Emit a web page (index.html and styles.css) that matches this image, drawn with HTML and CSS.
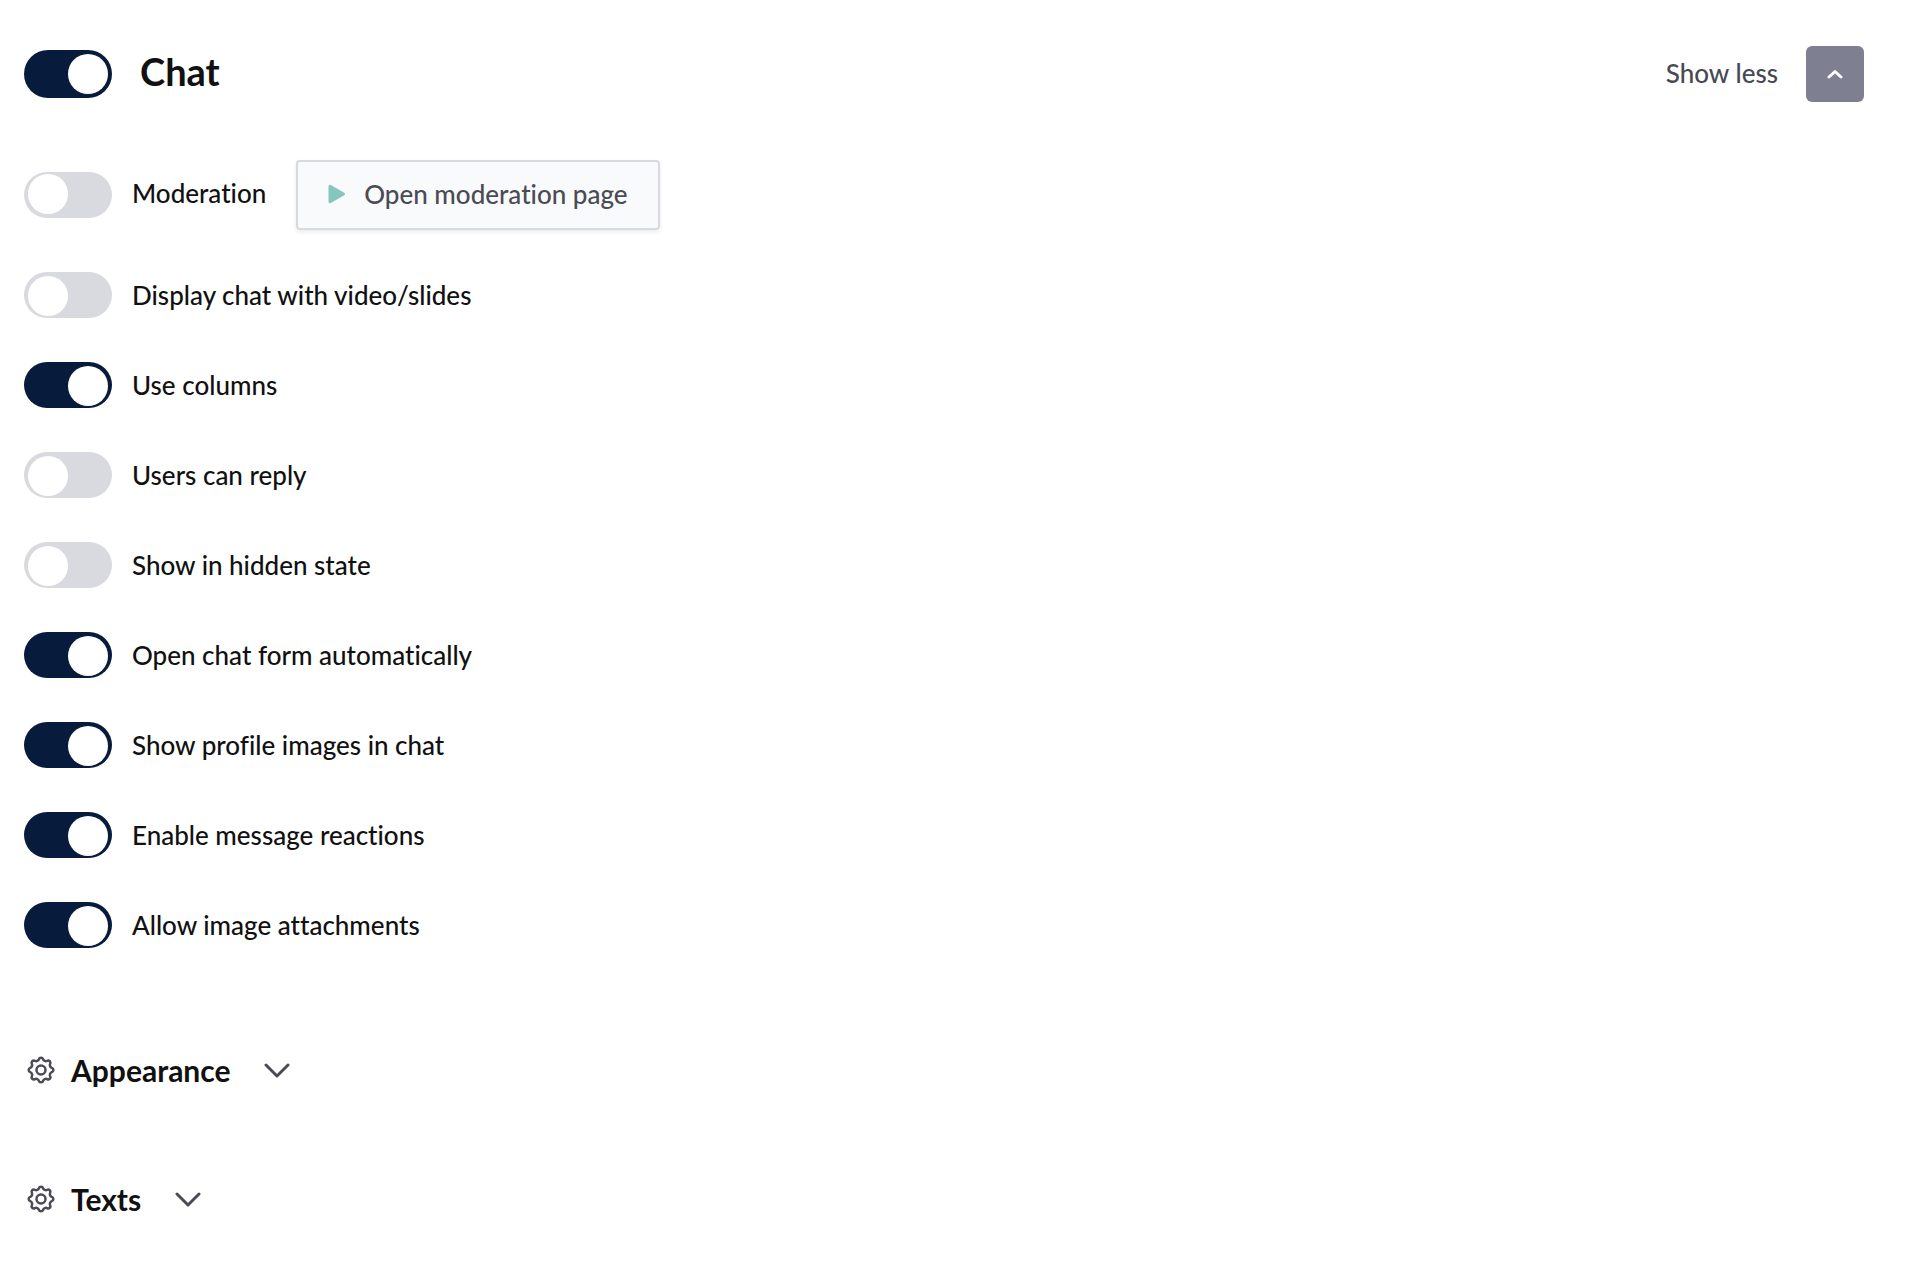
FILE: index.html
```html
<!DOCTYPE html>
<html lang="en">
<head>
    <meta charset="UTF-8">
    <meta name="viewport" content="width=device-width, initial-scale=1.0">
    <title>Chat settings</title>
    <link rel="stylesheet" href="styles.css">
</head>
<body>

<header class="panel-header">
    <input class="toggle toggle-large" type="checkbox" id="chat" checked>
    <h1><label for="chat">Chat</label></h1>
    <label class="show-less" for="collapse">Show less</label>
    <button class="collapse" id="collapse" type="button" aria-label="Show less">
        <svg width="16" height="10" viewBox="0 0 16 10"><path d="M2 8 L8 2.500 L14 8"/></svg>
    </button>
</header>

<main>
    <div class="options">
        <div class="option option-moderation">
            <input class="toggle" type="checkbox" id="moderation">
            <label for="moderation">Moderation</label>
            <button class="open-page" type="button">
                <svg width="18" height="20" viewBox="0 0 18 20"><path d="M2 2.200 L15.500 10 L2 17.800 Z"/></svg>
                Open moderation page
            </button>
        </div>
        <div class="option">
            <input class="toggle" type="checkbox" id="withVideo">
            <label for="withVideo">Display chat with video/slides</label>
        </div>
        <div class="option">
            <input class="toggle" type="checkbox" id="columns" checked>
            <label for="columns">Use columns</label>
        </div>
        <div class="option">
            <input class="toggle" type="checkbox" id="reply">
            <label for="reply">Users can reply</label>
        </div>
        <div class="option">
            <input class="toggle" type="checkbox" id="hiddenState">
            <label for="hiddenState">Show in hidden state</label>
        </div>
        <div class="option">
            <input class="toggle" type="checkbox" id="openForm" checked>
            <label for="openForm">Open chat form automatically</label>
        </div>
        <div class="option">
            <input class="toggle" type="checkbox" id="profileImages" checked>
            <label for="profileImages">Show profile images in chat</label>
        </div>
        <div class="option">
            <input class="toggle" type="checkbox" id="reactions" checked>
            <label for="reactions">Enable message reactions</label>
        </div>
        <div class="option">
            <input class="toggle" type="checkbox" id="attachments" checked>
            <label for="attachments">Allow image attachments</label>
        </div>
    </div>

    <!-- Collapsed sections -->
    <div class="sections">
        <h2>
            <button class="section" type="button" aria-expanded="false">
                <svg class="gear" width="28" height="28" viewBox="-14 -14 28 28">
                    <path d="M10.800 -2.100 A2.200 2.200 0 0 1 10.800 2.100 A3 3 0 0 0 9.100 6.100 A2.200 2.200 0 0 1 6.100 9.100 A3 3 0 0 0 2.100 10.800 A2.200 2.200 0 0 1 -2.100 10.800 A3 3 0 0 0 -6.100 9.100 A2.200 2.200 0 0 1 -9.100 6.100 A3 3 0 0 0 -10.800 2.100 A2.200 2.200 0 0 1 -10.800 -2.100 A3 3 0 0 0 -9.100 -6.100 A2.200 2.200 0 0 1 -6.100 -9.100 A3 3 0 0 0 -2.100 -10.800 A2.200 2.200 0 0 1 2.100 -10.800 A3 3 0 0 0 6.100 -9.100 A2.200 2.200 0 0 1 9.100 -6.100 A3 3 0 0 0 10.800 -2.100 Z"/>
                    <circle r="4.500"/>
                </svg>
                <span>Appearance</span>
                <svg class="chevron" width="26" height="16" viewBox="0 0 26 16"><path d="M2 3 L13 14 L24 3"/></svg>
            </button>
        </h2>
        <h2>
            <button class="section" type="button" aria-expanded="false">
                <svg class="gear" width="28" height="28" viewBox="-14 -14 28 28">
                    <path d="M10.800 -2.100 A2.200 2.200 0 0 1 10.800 2.100 A3 3 0 0 0 9.100 6.100 A2.200 2.200 0 0 1 6.100 9.100 A3 3 0 0 0 2.100 10.800 A2.200 2.200 0 0 1 -2.100 10.800 A3 3 0 0 0 -6.100 9.100 A2.200 2.200 0 0 1 -9.100 6.100 A3 3 0 0 0 -10.800 2.100 A2.200 2.200 0 0 1 -10.800 -2.100 A3 3 0 0 0 -9.100 -6.100 A2.200 2.200 0 0 1 -6.100 -9.100 A3 3 0 0 0 -2.100 -10.800 A2.200 2.200 0 0 1 2.100 -10.800 A3 3 0 0 0 6.100 -9.100 A2.200 2.200 0 0 1 9.100 -6.100 A3 3 0 0 0 10.800 -2.100 Z"/>
                    <circle r="4.500"/>
                </svg>
                <span>Texts</span>
                <svg class="chevron" width="26" height="16" viewBox="0 0 26 16"><path d="M2 3 L13 14 L24 3"/></svg>
            </button>
        </h2>
    </div>
</main>

</body>
</html>
```
FILE: styles.css
```css
* {
    box-sizing: border-box;
}

body {
    font-family: Lato, "Liberation Sans", sans-serif;
    font-size: 26px;
    font-weight: 500;
    font-variant-ligatures: no-common-ligatures;
    line-height: 32px;
    margin: 0;
    padding: 46px 58px 46px 24px;
    background-color: #fff;
    color: #111;
}

button {
    font: inherit;
    font-variant-ligatures: inherit;
    border: none;
    cursor: pointer;
}

svg {
    display: block;
    fill: none;
    stroke-linecap: round;
    stroke-linejoin: round;
}

.panel-header {
    display: flex;
    align-items: center;
    margin-bottom: 58px;
}

h1 {
    flex: 1;
    margin: 0;
    padding: 0 0 6px 28px;
    font-size: 38px;
    font-weight: 700;
    line-height: 44px;
}

.show-less {
    margin-right: 28px;
    padding-bottom: 2px;
    color: #474a54;
}

.collapse {
    display: flex;
    align-items: center;
    justify-content: center;
    width: 58px;
    height: 56px;
    padding: 0;
    border-radius: 6px;
    background-color: #7f7f92;
}

.collapse svg {
    stroke: #fff;
    stroke-width: 3px;
}

/* Switches */
.toggle {
    appearance: none;
    flex: none;
    width: 88px;
    height: 46px;
    margin: 0;
    padding: 4px 4px 2px;
    border-radius: 23px;
    background-color: #d9dae0;
    cursor: pointer;
}

.toggle::before {
    content: "";
    display: block;
    width: 40px;
    height: 40px;
    border-radius: 50%;
    background-color: #fff;
}

.toggle:checked {
    background-color: #071b3d;
}

.toggle:checked::before {
    margin-left: auto;
}

.toggle-large {
    height: 48px;
    border-radius: 24px;
}

.options {
    display: flex;
    flex-direction: column;
    gap: 44px;
    margin-bottom: 104px;
}

.option {
    display: flex;
    align-items: center;
    gap: 20px;
}

.option-moderation {
    margin-bottom: -2px;
}

.option-moderation label {
    padding-bottom: 4px;
}

.option-moderation .toggle {
    padding-top: 2px;
}

.open-page {
    display: flex;
    align-items: center;
    gap: 18px;
    height: 70px;
    margin-left: 10px;
    padding: 0 30px 2px;
    border: 2px solid #d9dae0;
    border-radius: 4px;
    background-color: #f9fafc;
    box-shadow: 0 2px 4px rgba(0, 0, 0, 0.08);
    color: #4b4b55;
}

.open-page svg {
    fill: #87c5bf;
    stroke: #87c5bf;
    stroke-width: 3px;
}

.sections {
    display: flex;
    flex-direction: column;
    gap: 93px;
}

h2 {
    margin: 0;
    font-size: 30px;
    font-weight: 700;
    line-height: 36px;
}

.section {
    display: flex;
    align-items: center;
    padding: 0 3px;
    background: none;
    color: #111;
}

.gear {
    margin-right: 16px;
    stroke: #4b4b55;
    stroke-width: 2.500px;
}

.chevron {
    margin-left: 34px;
    stroke: #4b4b55;
    stroke-width: 3px;
}
```
